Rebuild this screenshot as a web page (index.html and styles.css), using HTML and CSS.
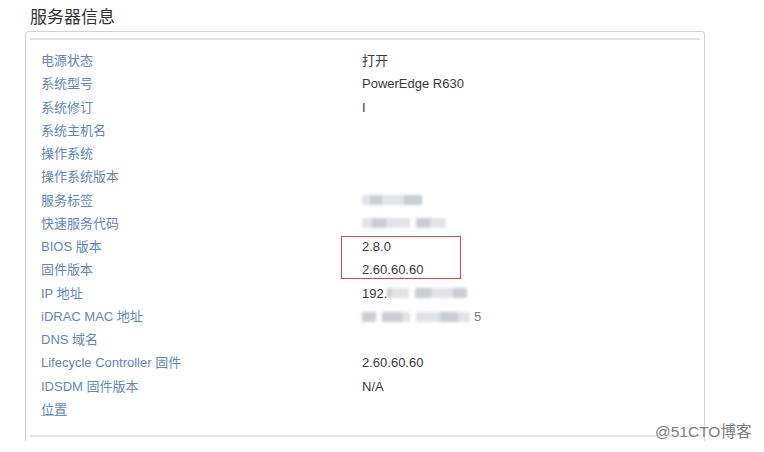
FILE: index.html
```html
<!DOCTYPE html>
<html lang="zh-CN">
<head>
<meta charset="utf-8">
<title>服务器信息</title>
<link rel="stylesheet" href="styles.css">
</head>
<body>
<h1 class="title">服务器信息</h1>
<div class="panel">
  <div class="panel-top"></div>
  <div class="rows">
    <div class="row"><span class="label">电源状态</span><span class="value">打开</span></div>
    <div class="row"><span class="label">系统型号</span><span class="value">PowerEdge R630</span></div>
    <div class="row"><span class="label">系统修订</span><span class="value">I</span></div>
    <div class="row"><span class="label">系统主机名</span><span class="value"></span></div>
    <div class="row"><span class="label">操作系统</span><span class="value"></span></div>
    <div class="row"><span class="label">操作系统版本</span><span class="value"></span></div>
    <div class="row"><span class="label">服务标签</span><span class="value"><span class="mask"><i class="m2" style="width:8px"></i><i class="m1" style="width:12px"></i><i class="m2" style="width:22px"></i><i class="m1" style="width:18px"></i></span></span></div>
    <div class="row"><span class="label">快速服务代码</span><span class="value"><span class="mask"><i class="m2" style="width:10px"></i><i class="m1" style="width:14px"></i><i class="m2" style="width:24px"></i><i class="gap"></i><i class="m1" style="width:14px"></i><i class="m2" style="width:16px"></i></span></span></div>
    <div class="row"><span class="label">BIOS 版本</span><span class="value">2.8.0</span></div>
    <div class="row"><span class="label">固件版本</span><span class="value">2.60.60.60</span></div>
    <div class="row"><span class="label">IP 地址</span><span class="value">192.<span class="mask"><i class="m1" style="width:4px"></i><i class="m2" style="width:18px"></i><i class="gap"></i><i class="m1" style="width:16px"></i><i class="m2" style="width:22px"></i><i class="m1" style="width:14px"></i></span></span></div>
    <div class="row"><span class="label">iDRAC MAC 地址</span><span class="value"><span class="mask"><i class="m1" style="width:14px"></i><i class="gap"></i><i class="m1" style="width:20px"></i><i class="m2" style="width:8px"></i><i class="gap"></i><i class="m2" style="width:24px"></i><i class="m1" style="width:18px"></i><i class="m2" style="width:12px"></i></span><span class="tail">5</span></span></div>
    <div class="row"><span class="label">DNS 域名</span><span class="value"></span></div>
    <div class="row"><span class="label">Lifecycle Controller 固件</span><span class="value">2.60.60.60</span></div>
    <div class="row"><span class="label">IDSDM 固件版本</span><span class="value">N/A</span></div>
    <div class="row"><span class="label link">位置</span><span class="value"></span></div>
    <div class="highlight"></div>
  </div>
  <div class="panel-bottom"></div>
</div>
<div class="watermark">@51CTO博客</div>
</body>
</html>
```

FILE: styles.css
```css
html, body {
  margin: 0;
  padding: 0;
  background: #ffffff;
}
body {
  width: 764px;
  height: 452px;
  overflow: hidden;
  position: relative;
  font-family: "Liberation Sans", Arial, "Noto Sans CJK SC", sans-serif;
  color: #333333;
}
.title {
  margin: 0;
  padding: 7px 0 0 30px;
  font-size: 17px;
  line-height: 22px;
  font-weight: normal;
  color: #333333;
}
.panel {
  box-sizing: border-box;
  margin: 2px 0 0 25px;
  width: 680px;
  height: 410px;
  border: 1px solid #d2d2d2;
  border-bottom: none;
  border-radius: 4px 4px 0 0;
}
.panel-top {
  margin: 0 4px;
  height: 6px;
  border-bottom: 2px solid #e2e2e2;
}
.rows {
  position: relative;
  margin-top: 9px;
  padding-left: 15px;
}
.row {
  display: grid;
  grid-template-columns: 321px 1fr;
  height: 23.27px;
  line-height: 23.27px;
  font-size: 13px;
}
.label {
  color: #6088b8;
}
.label.link {
  text-decoration: underline;
  text-decoration-color: #a9bdd8;
}
.value {
  color: #3a3a3a;
  display: flex;
  align-items: center;
}
.mask {
  display: inline-flex;
  align-items: center;
  height: 14px;
  filter: blur(1.6px);
  opacity: 0.7;
}
.mask i {
  display: inline-block;
  height: 10px;
}
.mask .m1 { background: #b4b8bf; }
.mask .m2 { background: #d6d8dc; }
.mask .gap { width: 6px; background: transparent; }
.tail {
  margin-left: 4px;
  color: #777777;
}
.highlight {
  position: absolute;
  left: 315px;
  top: 187px;
  width: 118px;
  height: 41px;
  border: 1px solid #d24a4a;
}
.panel-bottom {
  margin: 14px 4px 0;
  height: 0;
  border-bottom: 2px solid #e2e2e2;
}
.watermark {
  position: absolute;
  left: 655px;
  top: 423px;
  font-size: 15.5px;
  line-height: 18px;
  color: #7e7e7e;
  text-shadow: 0 0 2px #ffffff, 0 0 2px #ffffff;
  font-family: "Liberation Sans", Arial, "Noto Sans CJK SC", sans-serif;
}
```
